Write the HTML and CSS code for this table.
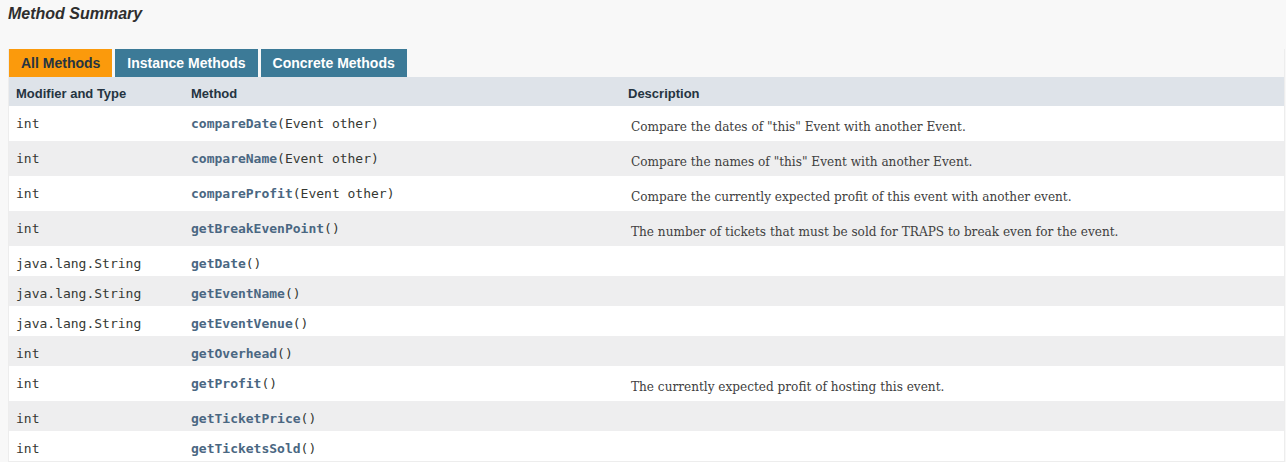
FILE: index.html
```html
<!DOCTYPE html>
<html>
<head>
<meta charset="utf-8">
<link rel="stylesheet" href="styles.css">
</head>
<body>
<h3 class="title">Method Summary</h3>
<div class="summary">
  <div class="tabs">
    <span class="tab active">All Methods</span>
    <span class="tab">Instance Methods</span>
    <span class="tab">Concrete Methods</span>
  </div>
  <table class="table">
    <colgroup><col class="c1"><col class="c2"><col class="c3"></colgroup>
    <thead>
      <tr><th>Modifier and Type</th><th>Method</th><th>Description</th></tr>
    </thead>
    <tbody>
      <tr class="odd"><td class="code">int</td><td class="code"><span class="name">compareDate</span>(Event&nbsp;other)</td><td><div class="block">Compare the dates of "this" Event with another Event.</div></td></tr>
      <tr class="even"><td class="code">int</td><td class="code"><span class="name">compareName</span>(Event&nbsp;other)</td><td><div class="block">Compare the names of "this" Event with another Event.</div></td></tr>
      <tr class="odd"><td class="code">int</td><td class="code"><span class="name">compareProfit</span>(Event&nbsp;other)</td><td><div class="block">Compare the currently expected profit of this event with another event.</div></td></tr>
      <tr class="even"><td class="code">int</td><td class="code"><span class="name">getBreakEvenPoint</span>()</td><td><div class="block">The number of tickets that must be sold for TRAPS to break even for the event.</div></td></tr>
      <tr class="odd"><td class="code">java.lang.String</td><td class="code"><span class="name">getDate</span>()</td><td></td></tr>
      <tr class="even"><td class="code">java.lang.String</td><td class="code"><span class="name">getEventName</span>()</td><td></td></tr>
      <tr class="odd"><td class="code">java.lang.String</td><td class="code"><span class="name">getEventVenue</span>()</td><td></td></tr>
      <tr class="even"><td class="code">int</td><td class="code"><span class="name">getOverhead</span>()</td><td></td></tr>
      <tr class="odd"><td class="code">int</td><td class="code"><span class="name">getProfit</span>()</td><td><div class="block">The currently expected profit of hosting this event.</div></td></tr>
      <tr class="even"><td class="code">int</td><td class="code"><span class="name">getTicketPrice</span>()</td><td></td></tr>
      <tr class="odd"><td class="code">int</td><td class="code"><span class="name">getTicketsSold</span>()</td><td></td></tr>
    </tbody>
  </table>
</div>
</body>
</html>
```
FILE: styles.css
```css
html, body {
  margin: 0;
  background: #f8f8f8;
}
body {
  padding: 0 1px 0 8px;
  font-family: "Liberation Sans", Arial, sans-serif;
  color: #353833;
}
.title {
  margin: 4px 0 25px 0;
  font-size: 16px;
  line-height: 20px;
  font-weight: bold;
  font-style: italic;
  color: #2e2e2e;
}
.summary {
  border: 1px solid #ededed;
  border-top: none;
}
.tabs {
  display: flex;
  gap: 3px;
  background: #f8f8f8;
}
.tab {
  display: block;
  height: 28px;
  line-height: 28px;
  padding: 0 12px;
  font-size: 14px;
  font-weight: bold;
  color: #ffffff;
  background: #3c7a97;
  white-space: nowrap;
}
.tab.active {
  background: #fb9a0c;
  color: #253441;
}
.table {
  width: 100%;
  table-layout: fixed;
  border-collapse: collapse;
  border-spacing: 0;
}
.c1 { width: 175px; }
.c2 { width: 437px; }
th {
  background: #dee3e9;
  text-align: left;
  font-size: 13px;
  font-weight: bold;
  line-height: 18px;
  padding: 8px 3px 3px 7px;
  color: #253441;
}
td {
  padding: 8px 3px 3px 7px;
  vertical-align: top;
  line-height: 19px;
}
tr.odd td { background: #ffffff; }
tr.even td { background: #eeeeef; }
.code {
  font-family: "DejaVu Sans Mono", monospace;
  font-size: 13px;
  color: #353833;
  white-space: nowrap;
}
.name {
  color: #4a6782;
  font-weight: 600;
}
.block {
  margin: 4px 10px 1px 3px;
  font-family: "DejaVu Serif", Georgia, serif;
  font-size: 12.1px;
  line-height: 19px;
  color: #404040;
}
```
